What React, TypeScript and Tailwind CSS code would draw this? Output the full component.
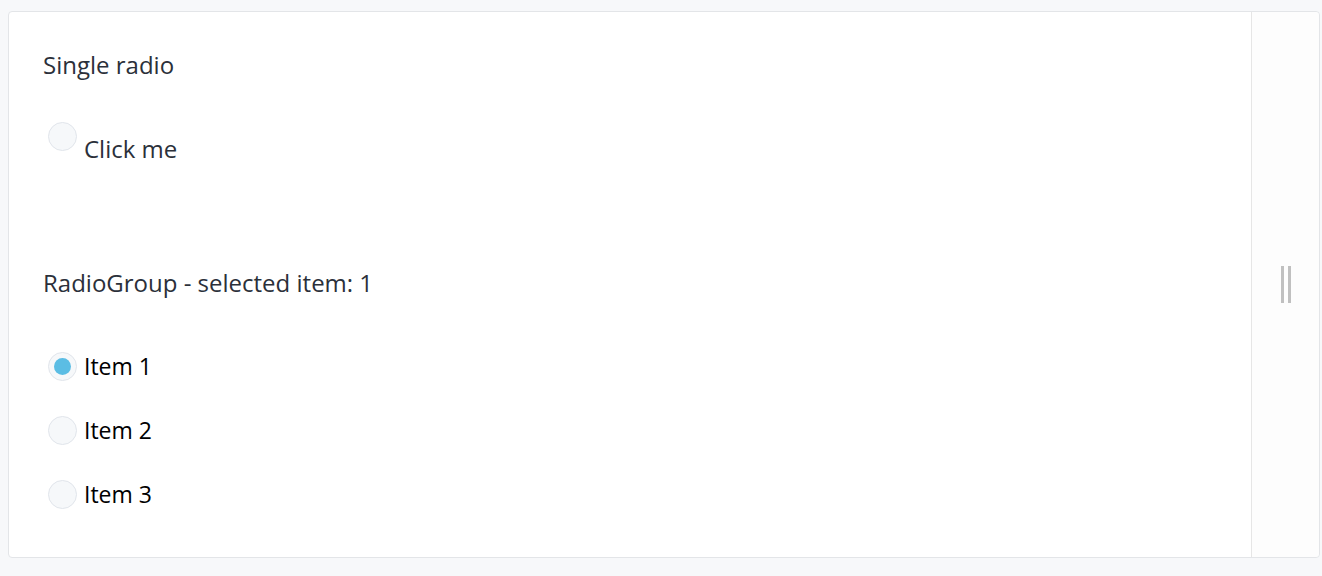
import React, { useState } from 'react';

const Radio = ({ checked }: { checked: boolean }) => (
  <span className="flex h-[29px] w-[29px] shrink-0 items-center justify-center rounded-full border border-[#e1e5eb] bg-[#f6f8fa]">
    {checked && <span className="h-[17px] w-[17px] rounded-full bg-[#5bbde4]" />}
  </span>
);

export default function App() {
  const [selected, setSelected] = useState(1);
  const [single, setSingle] = useState(false);

  return (
    <div className="min-h-[576px] bg-[#f7f8fa] pl-2 pr-[2px] pt-[11px] pb-[18px] font-['Open_Sans',sans-serif]">
      <div className="flex h-[547px] rounded-[4px] border border-[#e3e5e8] bg-white">
        <div className="flex-1 pl-[34px] pt-[38px]">
          <div className="text-[24px] leading-[30px] text-[#2b303a]">Single radio</div>

          <button onClick={() => setSingle(!single)} className="mt-[42px] ml-[5px] flex items-start gap-[7px]">
            <Radio checked={single} />
            <span className="mt-[12px] text-[24px] leading-[30px] text-[#2b303a]">Click me</span>
          </button>

          <div className="mt-[104px] text-[24px] leading-[30px] text-[#2b303a]">
            RadioGroup - selected item: {selected}
          </div>

          <div className="mt-[54px] ml-[5px] flex flex-col gap-[35px]">
            {[1, 2, 3].map((n) => (
              <button key={n} onClick={() => setSelected(n)} className="flex items-center gap-[7px]">
                <Radio checked={selected === n} />
                <span className="text-[23px] leading-[29px] text-black">Item {n}</span>
              </button>
            ))}
          </div>
        </div>

        <div className="flex w-[68px] items-center justify-center rounded-r-[4px] border-l border-[#e6e6e6] bg-[#fdfdfd]">
          <div className="flex gap-[4px]">
            <span className="h-[37px] w-[3px] bg-[#c0c0c0]" />
            <span className="h-[37px] w-[3px] bg-[#c0c0c0]" />
          </div>
        </div>
      </div>
    </div>
  );
}
